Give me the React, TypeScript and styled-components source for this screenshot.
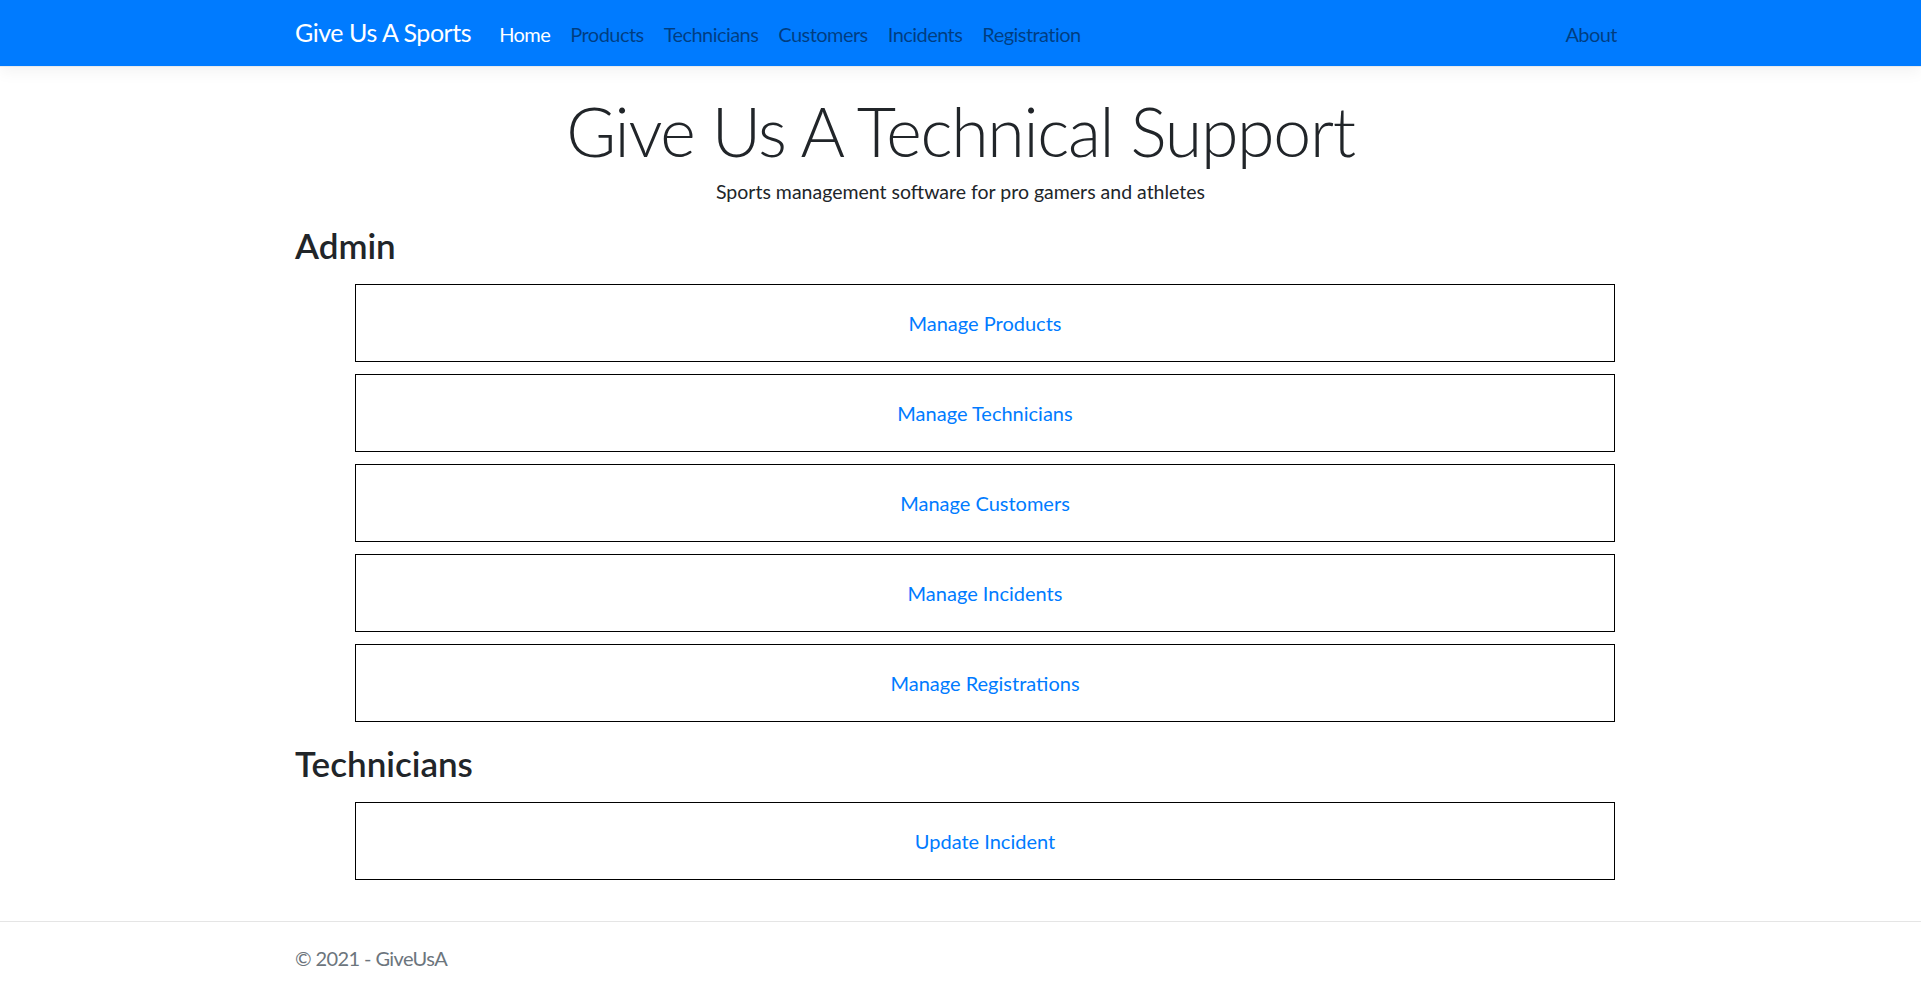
import React from 'react';
import styled, { createGlobalStyle } from 'styled-components';

const GlobalStyle = createGlobalStyle`
  html, body {
    margin: 0;
    padding: 0;
    background: #ffffff;
  }
  body {
    font-family: Lato, "Open Sans", sans-serif;
    color: #212529;
  }
  *, *::before, *::after {
    box-sizing: border-box;
  }
`;

const Navbar = styled.header`
  background: #007bff;
  height: 67px;
  border-bottom: 1px solid #e6eaee;
  box-shadow: 0 5px 15px rgba(0, 0, 0, 0.05);
  display: flex;
  align-items: center;
`;

const Container = styled.div`
  width: 1322px;
  margin-left: calc(50% - 665.5px);
`;

const NavInner = styled(Container)`
  display: flex;
  align-items: baseline;
`;

const Brand = styled.a`
  font-size: 25px;
  line-height: 37.5px;
  letter-spacing: -0.45px;
  color: #ffffff;
  margin-right: 18px;
  text-decoration: none;
  white-space: nowrap;
`;

const NavList = styled.nav`
  display: flex;
  align-items: baseline;
`;

const RightNav = styled(NavList)`
  margin-left: auto;
  & > a:last-child {
    padding-right: 0;
  }
`;

const NavLink = styled.a<{ $active?: boolean }>`
  font-size: 20px;
  line-height: 30px;
  letter-spacing: -0.55px;
  padding: 0 10px;
  color: ${(p) => (p.$active ? '#ffffff' : 'rgba(0, 0, 0, 0.5)')};
  text-decoration: none;
  white-space: nowrap;
`;

const Hero = styled.div`
  text-align: center;
  padding-top: 22px;
`;

const Title = styled.h1`
  margin: 0;
  font-size: 68px;
  font-weight: 300;
  line-height: 84px;
  letter-spacing: -1.3px;
  color: #212529;
`;

const Lead = styled.p`
  margin: 6px 0 0;
  font-size: 19.5px;
  line-height: 26.25px;
  color: #212529;
`;

const Section = styled.section<{ $first?: boolean }>`
  margin-top: ${(p) => (p.$first ? '19px' : '20.4px')};
`;

const SectionTitle = styled.h3`
  margin: 0 0 17.6px;
  font-size: 35px;
  font-weight: 600;
  line-height: 42px;
  color: #212529;
`;

const LinkStack = styled.div`
  display: flex;
  flex-direction: column;
  gap: 12px;
  margin-left: 60px;
  width: 1260px;
`;

const LinkBox = styled.a`
  display: flex;
  align-items: center;
  justify-content: center;
  height: 78px;
  border: 1px solid #000000;
  font-size: 20px;
  color: #007bff;
  text-decoration: none;
`;

const Footer = styled.footer`
  margin-top: 41px;
  border-top: 1px solid #e5e5e5;
  padding: 21px 0 21px;
`;

const FooterText = styled.div`
  font-size: 20px;
  line-height: 30px;
  letter-spacing: -0.6px;
  color: #6c757d;
`;

const navItems = ['Products', 'Technicians', 'Customers', 'Incidents', 'Registration'];
const adminLinks = [
  'Manage Products',
  'Manage Technicians',
  'Manage Customers',
  'Manage Incidents',
  'Manage Registrations',
];

export default function App() {
  return (
    <>
      <GlobalStyle />
      <Navbar>
        <NavInner>
          <Brand href="#">Give Us A Sports</Brand>
          <NavList>
            <NavLink href="#" $active>
              Home
            </NavLink>
            {navItems.map((n) => (
              <NavLink href="#" key={n}>
                {n}
              </NavLink>
            ))}
          </NavList>
          <RightNav>
            <NavLink href="#">About</NavLink>
          </RightNav>
        </NavInner>
      </Navbar>
      <main>
        <Hero>
          <Title>Give Us A Technical Support</Title>
          <Lead>Sports management software for pro gamers and athletes</Lead>
        </Hero>
        <Container>
          <Section $first>
            <SectionTitle>Admin</SectionTitle>
            <LinkStack>
              {adminLinks.map((l) => (
                <LinkBox href="#" key={l}>
                  {l}
                </LinkBox>
              ))}
            </LinkStack>
          </Section>
          <Section>
            <SectionTitle>Technicians</SectionTitle>
            <LinkStack>
              <LinkBox href="#">Update Incident</LinkBox>
            </LinkStack>
          </Section>
        </Container>
      </main>
      <Footer>
        <Container>
          <FooterText>© 2021 - GiveUsA</FooterText>
        </Container>
      </Footer>
    </>
  );
}
